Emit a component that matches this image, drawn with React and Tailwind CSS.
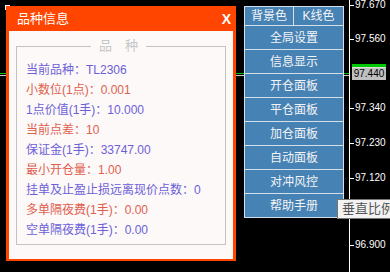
import React from 'react';

const BLUE = 'text-[#6c5fd8]';
const RED = 'text-[#e0604e]';

const rows = [
  { text: '当前品种：TL2306', color: BLUE },
  { text: '小数位(1点)：0.001', color: RED },
  { text: '1点价值(1手)：10.000', color: BLUE },
  { text: '当前点差：10', color: RED },
  { text: '保证金(1手)：33747.00', color: BLUE },
  { text: '最小开仓量：1.00', color: RED },
  { text: '挂单及止盈止损远离现价点数：0', color: BLUE },
  { text: '多单隔夜费(1手)：0.00', color: RED },
  { text: '空单隔夜费(1手)：0.00', color: BLUE },
];

const buttons = ['全局设置', '信息显示', '开仓面板', '平仓面板', '加仓面板', '自动面板', '对冲风控', '帮助手册'];

const ticks = [
  { label: '97.670', top: 'top-[0px]' },
  { label: '97.560', top: 'top-[34px]' },
  { label: '97.340', top: 'top-[103px]' },
  { label: '97.230', top: 'top-[138px]' },
  { label: '97.120', top: 'top-[173px]' },
  { label: '96.900', top: 'top-[240px]' },
];

function InfoPanel() {
  return (
    <div className="ml-[6px] mt-[6px] flex h-[255px] w-[230px] flex-col bg-[#ff4500]">
      {/* Title bar */}
      <div className="flex h-[25px] items-center justify-between pl-[11px] pr-[5px] text-white">
        <span className="text-[13px] leading-none">品种信息</span>
        <span className="text-[14px] font-bold leading-none">X</span>
      </div>

      {/* Body */}
      <div className="mx-[3px] mb-[2px] flex-1 bg-[#fcf9f8] px-[7px] pt-[7px]">
        <fieldset className="border border-[#c2c2c2] pb-[4px] pl-[9px] pt-[6px]">
          <legend className="ml-[65px] px-[8px] text-[13px] leading-[16px] text-[#c6c6c6]">品　种</legend>
          {rows.map((r) => (
            <div key={r.text} className={`h-[20px] text-[12px] leading-[20px] ${r.color}`}>
              {r.text}
            </div>
          ))}
        </fieldset>
      </div>
    </div>
  );
}

function ButtonColumn() {
  const cell = 'flex items-center justify-center border-b border-r border-[#d3dfeb] bg-[#4682b4] text-[12px] text-[#f4f4f4]';
  return (
    <div className="ml-[8px] mt-[6px] flex w-[100px] flex-col self-start border-l border-t border-[#d3dfeb]">
      <div className="flex h-[19px]">
        <div className={`${cell} w-[49px]`}>背景色</div>
        <div className={`${cell} flex-1`}>K线色</div>
      </div>
      {buttons.map((b) => (
        <div key={b} className={`${cell} h-[24px]`}>{b}</div>
      ))}
    </div>
  );
}

function PriceAxis() {
  return (
    <div className="relative ml-[5px] h-full flex-1 border-l border-white">
      {ticks.map((t) => (
        <div key={t.label} className={`absolute left-0 flex h-[10px] items-center ${t.top}`}>
          <span className="h-px w-[4px] bg-white" />
          <span className="ml-[1px] text-[10px] leading-[10px] text-white">{t.label}</span>
        </div>
      ))}

      {/* ask / bid labels */}
      <div className="absolute left-[2px] top-[64px] h-[6px] w-[34px] bg-[#00c800]" />
      <div className="absolute left-[2px] top-[67px] flex h-[13px] w-[34px] items-center justify-center border-t border-[#e0e0e0] bg-[#c0c0c0] text-[10px] leading-none text-black">
        97.440
      </div>
    </div>
  );
}

export default function App() {
  return (
    <div className="relative h-[272px] w-[390px] overflow-hidden bg-black font-[family-name:'Liberation_Sans','Noto_Sans_CJK_SC',sans-serif]">
      {/* price lines behind the windows */}
      <div className="absolute left-0 top-[73px] h-px w-[349px] bg-[#00c000]" />
      <div className="absolute left-0 top-[75px] h-px w-[349px] bg-[#c8c8c8]" />
      <div className="absolute left-[5px] top-[5px] h-[5px] w-[5px] border-l border-t border-white" />

      <div className="relative z-10 flex h-full">
        <InfoPanel />
        <ButtonColumn />
        <PriceAxis />
      </div>

      {/* tooltip */}
      <div className="absolute left-[337px] top-[199px] z-20 h-[20px] w-[70px] border border-[#767676] bg-[#f3f3f3] pl-[4px] text-[13px] leading-[18px] text-[#575757]">
        垂直比例
      </div>
    </div>
  );
}
